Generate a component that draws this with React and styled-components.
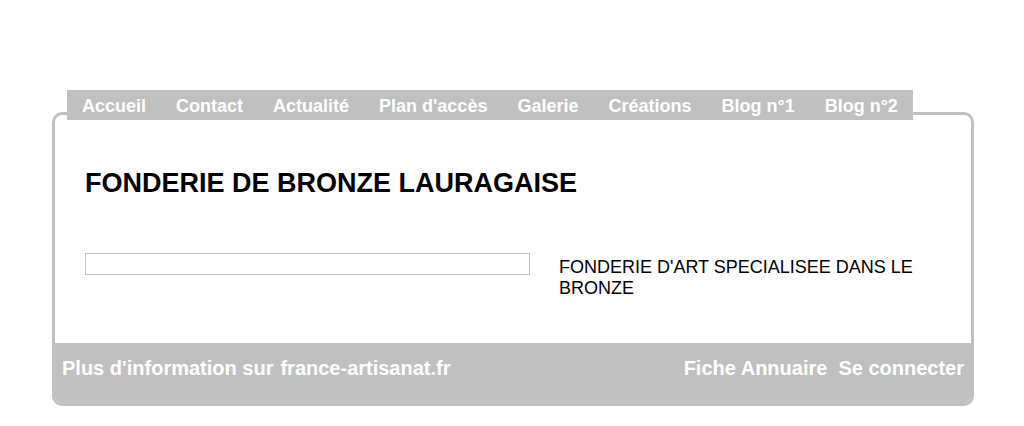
import React from "react";
import styled, { createGlobalStyle } from "styled-components";

const GRAY = "#c0c0c0";

// === Global ===
const GlobalStyle = createGlobalStyle`
  body {
    margin: 0;
    background: #fff;
    font-family: "Liberation Sans", Arial, sans-serif;
  }
`;

// === Layout ===
const Page = styled.div`
  padding: 90px 50px 20px 52px;
`;

const Nav = styled.nav`
  position: relative;
  z-index: 1;
  display: inline-flex;
  margin-left: 15px;
  background: ${GRAY};
  height: 30px;
  padding-top: 2px;
  box-sizing: border-box;
  align-items: center;
`;

const NavItem = styled.a`
  padding: 0 15px;
  color: #fff;
  font-weight: bold;
  font-size: 18px;
  line-height: 28px;
  text-decoration: none;
  white-space: nowrap;
`;

const Card = styled.section`
  margin-top: -8px;
  border: 3px solid ${GRAY};
  border-radius: 10px;
  overflow: hidden;
  background: #fff;
`;

const Content = styled.div`
  padding: 53px 30px 44px;
`;

const Title = styled.h1`
  margin: 0 0 55px;
  font-size: 27px;
  font-weight: bold;
  color: #000;
  line-height: 30px;
`;

const Row = styled.div`
  display: grid;
  grid-template-columns: 445px 1fr;
  column-gap: 29px;
  align-items: start;
`;

const Box = styled.div`
  height: 20px;
  border: 1px solid ${GRAY};
`;

const Description = styled.p`
  margin: 4px 0 0;
  font-size: 18px;
  line-height: 21px;
  color: #000;
  max-width: 382px;
`;

const Footer = styled.footer`
  display: flex;
  justify-content: space-between;
  align-items: flex-start;
  background: ${GRAY};
  height: 60px;
  padding: 14px 7px 0;
  box-sizing: border-box;
`;

const FooterGroup = styled.div`
  display: flex;
  gap: ${({ $gap }) => $gap}px;
`;

const FooterLink = styled.a`
  color: #fff;
  font-weight: bold;
  font-size: 20px;
  line-height: 23px;
  text-decoration: none;
  white-space: nowrap;
`;

const menu = [
  "Accueil",
  "Contact",
  "Actualité",
  "Plan d'accès",
  "Galerie",
  "Créations",
  "Blog n°1",
  "Blog n°2",
];

const App = () => (
  <>
    <GlobalStyle />
    <Page>
      <Nav>
        {menu.map((m) => (
          <NavItem key={m} href="#">
            {m}
          </NavItem>
        ))}
      </Nav>
      <Card>
        <Content>
          <Title>FONDERIE DE BRONZE LAURAGAISE</Title>
          <Row>
            <Box />
            <Description>FONDERIE D'ART SPECIALISEE DANS LE BRONZE</Description>
          </Row>
        </Content>
        <Footer>
          <FooterGroup $gap={7}>
            <FooterLink href="#">Plus d'information sur</FooterLink>
            <FooterLink href="#">france-artisanat.fr</FooterLink>
          </FooterGroup>
          <FooterGroup $gap={11}>
            <FooterLink href="#">Fiche Annuaire</FooterLink>
            <FooterLink href="#">Se connecter</FooterLink>
          </FooterGroup>
        </Footer>
      </Card>
    </Page>
  </>
);

export default App;
